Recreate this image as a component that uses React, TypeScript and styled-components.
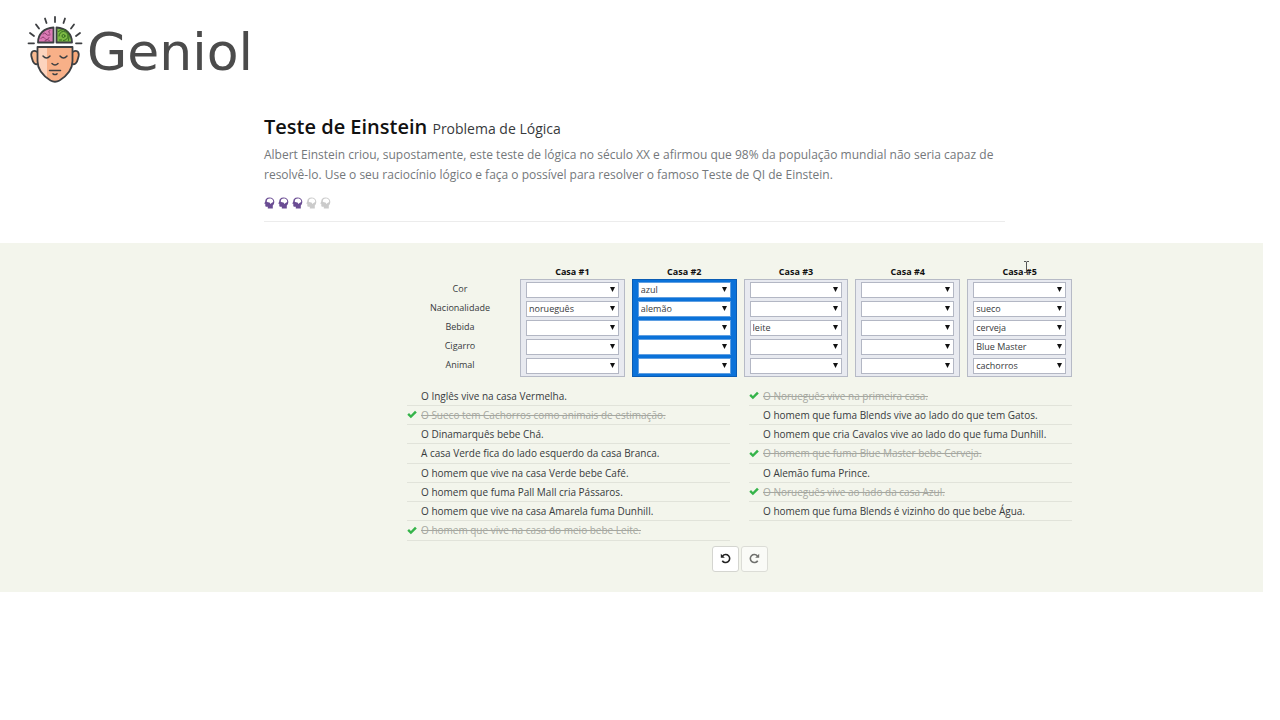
import React, { useState } from "react";
import styled, { createGlobalStyle } from "styled-components";

const GlobalStyle = createGlobalStyle`
  * { box-sizing: border-box; }
  body {
    margin: 0;
    background: #ffffff;
    font-family: "Open Sans", "Noto Sans", sans-serif;
    color: #373a3c;
  }
`;

const Page = styled.div`
  padding-right: 17px;
`;

const Header = styled.header`
  padding: 13px 27px 0;
`;

const Brand = styled.a`
  display: inline-flex;
  align-items: center;
  gap: 3px;
  color: #4b4b4b;
  text-decoration: none;
`;

const Wordmark = styled.span`
  font-family: "DejaVu Sans", sans-serif;
  font-size: 52px;
  font-weight: 400;
  line-height: 70px;
  padding-top: 4px;
`;

const Intro = styled.section`
  max-width: 747px;
  margin: 0 auto;
  padding: 24px 0 21px 6px;
`;

const Title = styled.h1`
  margin: 0;
  font-size: 20px;
  line-height: 26px;
  font-weight: 600;
  color: #111111;
`;

const Subtitle = styled.small`
  font-size: 14px;
  font-weight: 400;
  color: #373a3c;
`;

const Lead = styled.p`
  margin: 3px 0 12px;
  font-size: 12px;
  line-height: 20px;
  font-weight: 400;
  color: #74787b;
`;

const Difficulty = styled.div`
  display: flex;
  gap: 3px;
  padding-bottom: 12px;
  border-bottom: 1px solid #ececec;
`;

const HeadSvg = styled.svg<{ $on: boolean }>`
  display: block;
  color: ${(p) => (p.$on ? "#6a4c93" : "#cbcbcb")};
`;

const Puzzle = styled.main`
  background: #f3f5ec;
  padding: 22px 0 20px 216px;
`;

const Board = styled.div`
  max-width: 665px;
  margin: 0 auto;
`;

const Houses = styled.div`
  display: grid;
  grid-template-columns: 106px repeat(5, 1fr);
  column-gap: 7px;
`;

const Labels = styled.div`
  display: grid;
  grid-template-rows: repeat(5, 1fr);
  height: 94px;
  margin-top: 15px;
  align-items: center;
  text-align: center;
  font-size: 9px;
`;

const House = styled.section`
  display: flex;
  flex-direction: column;
`;

const HouseName = styled.h2`
  margin: 0;
  font-size: 9px;
  line-height: 14px;
  font-weight: 700;
  text-align: center;
  color: #111111;
`;

const HouseBox = styled.div<{ $active: boolean }>`
  display: flex;
  flex-direction: column;
  gap: 3px;
  padding: 2px 5px;
  border: 1px solid ${(p) => (p.$active ? "#0a5cb4" : "#b6bac6")};
  background: ${(p) => (p.$active ? "#0b72d9" : "#e8eaf0")};
`;

const Field = styled.div`
  position: relative;
`;

const Select = styled.select<{ $active: boolean }>`
  appearance: none;
  display: block;
  width: 100%;
  height: 16px;
  margin: 0;
  padding: 0 12px 0 2px;
  border: 1px solid ${(p) => (p.$active ? "#5f9fe2" : "#b3b7c4")};
  border-radius: 0;
  background: #ffffff;
  font-family: inherit;
  font-size: 9px;
  line-height: 14px;
  color: #373a3c;
`;

const Arrow = styled.svg`
  position: absolute;
  top: 5px;
  right: 4px;
  pointer-events: none;
`;

const Clues = styled.div`
  display: grid;
  grid-template-columns: 1fr 1fr;
  column-gap: 19px;
  margin-top: 10px;
`;

const ClueList = styled.ul`
  display: grid;
  grid-template-rows: repeat(8, 1fr);
  min-height: 154px;
  margin: 0;
  padding: 0;
  list-style: none;
`;

const Clue = styled.li<{ $done: boolean }>`
  display: grid;
  grid-template-columns: 10px 1fr;
  column-gap: 4px;
  align-items: center;
  border-bottom: 1px solid #e1e3da;
  font-size: 10px;
  line-height: 16px;
  white-space: nowrap;
  color: ${(p) => (p.$done ? "#a5a7a0" : "#373a3c")};
`;

const ClueText = styled.span<{ $done: boolean }>`
  grid-column: 2;
  text-decoration: ${(p) => (p.$done ? "line-through" : "none")};
`;

const Actions = styled.div`
  display: flex;
  justify-content: center;
  gap: 2px;
  margin-top: 5px;
`;

const ActionButton = styled.button`
  display: flex;
  align-items: center;
  justify-content: center;
  width: 27px;
  height: 26px;
  padding: 0;
  border: 1px solid #d4d5d0;
  border-radius: 3px;
  background: #ffffff;
  color: #222222;
  &:disabled {
    border-color: #dcddd7;
    background: #fafbf7;
    color: #6f706d;
  }
`;

const Pointer = styled.svg`
  position: absolute;
  left: 1023px;
  top: 261px;
  pointer-events: none;
`;

const Logo = () => (
  <svg width="57" height="69" viewBox="0 0 57 69" fill="none" stroke="#3d3f42" strokeLinecap="round" strokeLinejoin="round" aria-hidden="true">
    <path d="M10.500 36 C5 33 3 37 5 42.500 C6 47 8 49 11.500 48" fill="#f8b990" strokeWidth="1.800" />
    <path d="M45.500 36 C51 33 53 37 51 42.500 C50 47 48 49 44.500 48" fill="#f8a878" strokeWidth="1.800" />
    <path d="M10.500 31 H45.500 V45 C45.500 55 38 61 32.500 64.500 Q28 67 23.500 64.500 C18 61 10.500 55 10.500 45Z" fill="#f8b088" stroke="none" />
    <path d="M10.500 31 H20 V62 C14 58 10.500 52 10.500 45Z" fill="#fcd3bd" stroke="none" />
    <path d="M10.500 31 H45.500 V45 C45.500 55 38 61 32.500 64.500 Q28 67 23.500 64.500 C18 61 10.500 55 10.500 45Z" strokeWidth="1.800" />
    <path d="M11 26.500 C11 18 17 12 26.500 11.500 V26.500Z" fill="#dc7ab5" strokeWidth="1.800" />
    <path d="M29.500 26.500 V11.500 C39 12 45 18 45 26.500Z" fill="#7cb944" strokeWidth="1.800" />
    <g strokeWidth="1" stroke="#8d3f70">
      <path d="M14 22.500 q2 -3 4 0 t4 -1" />
      <path d="M16 18 q2 -2 3 0 t4 1" />
      <path d="M23 14.500 q-3 1 0 3" />
      <path d="M18 25.500 v-1 q3 -2 5 0.500" />
    </g>
    <g strokeWidth="1" stroke="#356b21">
      <circle cx="36.500" cy="20" r="1.500" />
      <path d="M32 20 a4.500 4.500 0 1 1 4.500 4.500" />
      <path d="M31.500 15.500 q5 -4 9 0 q3 4 1 9" />
      <path d="M32.500 24 h2" />
    </g>
    <g strokeWidth="1.800">
      <path d="M1.500 27.300 H7" />
      <path d="M49 27.300 H54.500" />
      <path d="M3 17 L7 20" />
      <path d="M53 17 L49 20" />
      <path d="M9 8.500 L12 12.500" />
      <path d="M47 8.500 L44 12.500" />
      <path d="M18 2.500 L19.500 7" />
      <path d="M38 2.500 L36.500 7" />
      <path d="M28 0.900 V6" />
    </g>
    <g strokeWidth="1.500">
      <path d="M16 40 q3.500 4 7 0" />
      <path d="M33 40 q3.500 4 7 0" />
      <path d="M25 47.500 q3 3 6 0" />
      <path d="M22.500 54.500 H33.500" />
      <path d="M26 57.800 q2 1.500 4 0" />
    </g>
  </svg>
);

const Head = ({ on }: { on: boolean }) => (
  <HeadSvg $on={on} width="11" height="12" viewBox="0 0 11 12" aria-hidden="true">
    <path d="M5.500 0.500 C2.500 0.500 1.300 2.300 1.300 4.200 L0.300 6.800 H1.300 V9 Q1.300 9.800 2.300 9.800 H3.800 V11.500 H8.800 V8.500 C9.800 7.500 10.300 6 10.300 4.700 C10.300 2.200 8.300 0.500 5.500 0.500Z" fill="currentColor" />
    <path d="M5.700 1.400 C4 1.400 3 2.200 3 3.300 C2.300 4.300 3 5.300 4 5.300 L5.500 5.600 L6.500 6.900 L7.500 6 C9 5.800 9.500 4.700 9.100 3.600 C8.800 2 7.300 1.400 5.700 1.400Z" fill="#ffffff" />
  </HeadSvg>
);

const CheckIcon = () => (
  <svg width="10" height="9" viewBox="0 0 10 9" aria-hidden="true">
    <path d="M0.300 4.700 L2 3 L3.900 4.900 L8 0.800 L9.800 2.400 L3.900 8.300Z" fill="#35b44a" />
  </svg>
);

const RotateIcon = ({ flip }: { flip?: boolean }) => (
  <svg width="11" height="11" viewBox="0 0 11 11" aria-hidden="true">
    <g transform={flip ? "translate(11 0) scale(-1 1)" : undefined}>
      <path d="M2.600 3 A4 4 0 1 1 2.300 7.700" fill="none" stroke="currentColor" strokeWidth="1.600" />
      <path d="M0.800 0.800 V4.800 H4.800Z" fill="currentColor" />
    </g>
  </svg>
);

const categories = ["Cor", "Nacionalidade", "Bebida", "Cigarro", "Animal"];

const houses = [
  ["", "norueguês", "", "", ""],
  ["azul", "alemão", "", "", ""],
  ["", "", "leite", "", ""],
  ["", "", "", "", ""],
  ["", "sueco", "cerveja", "Blue Master", "cachorros"],
];

const clueColumns: { text: string; done?: boolean }[][] = [
  [
    { text: "O Inglês vive na casa Vermelha." },
    { text: "O Sueco tem Cachorros como animais de estimação.", done: true },
    { text: "O Dinamarquês bebe Chá." },
    { text: "A casa Verde fica do lado esquerdo da casa Branca." },
    { text: "O homem que vive na casa Verde bebe Café." },
    { text: "O homem que fuma Pall Mall cria Pássaros." },
    { text: "O homem que vive na casa Amarela fuma Dunhill." },
    { text: "O homem que vive na casa do meio bebe Leite.", done: true },
  ],
  [
    { text: "O Norueguês vive na primeira casa.", done: true },
    { text: "O homem que fuma Blends vive ao lado do que tem Gatos." },
    { text: "O homem que cria Cavalos vive ao lado do que fuma Dunhill." },
    { text: "O homem que fuma Blue Master bebe Cerveja.", done: true },
    { text: "O Alemão fuma Prince." },
    { text: "O Norueguês vive ao lado da casa Azul.", done: true },
    { text: "O homem que fuma Blends é vizinho do que bebe Água." },
  ],
];

export default function App() {
  const [active, setActive] = useState(1);
  return (
    <Page>
      <GlobalStyle />
      <Header>
        <Brand href="#">
          <Logo />
          <Wordmark>Geniol</Wordmark>
        </Brand>
      </Header>
      <Intro>
        <Title>
          Teste de Einstein <Subtitle>Problema de Lógica</Subtitle>
        </Title>
        <Lead>
          Albert Einstein criou, supostamente, este teste de lógica no século XX e afirmou que 98% da população
          mundial não seria capaz de resolvê-lo. Use o seu raciocínio lógico e faça o possível para resolver o
          famoso Teste de QI de Einstein.
        </Lead>
        <Difficulty role="img" aria-label="3/5">
          {[0, 1, 2, 3, 4].map((n) => (
            <Head key={n} on={n < 3} />
          ))}
        </Difficulty>
      </Intro>
      <Puzzle>
        <Board>
          <Houses>
            <Labels>
              {categories.map((c) => (
                <span key={c} id={c}>{c}</span>
              ))}
            </Labels>
            {houses.map((values, h) => (
              <House key={h}>
                <HouseName id={`casa-${h + 1}`}>Casa #{h + 1}</HouseName>
                <HouseBox $active={h === active}>
                  {values.map((value, i) => (
                    <Field key={i}>
                      <Select
                        $active={h === active}
                        defaultValue={value}
                        aria-labelledby={`${categories[i]} casa-${h + 1}`}
                        onFocus={() => setActive(h)}
                      >
                        <option value={value}>{value}</option>
                      </Select>
                      <Arrow width="5" height="5" viewBox="0 0 5 5" aria-hidden="true">
                        <path d="M0 0 H5 L2.500 5Z" fill="#111111" />
                      </Arrow>
                    </Field>
                  ))}
                </HouseBox>
              </House>
            ))}
          </Houses>
          <Clues>
            {clueColumns.map((clues, c) => (
              <ClueList key={c}>
                {clues.map(({ text, done = false }) => (
                  <Clue key={text} $done={done}>
                    {done && <CheckIcon />}
                    <ClueText $done={done}>{text}</ClueText>
                  </Clue>
                ))}
              </ClueList>
            ))}
          </Clues>
          <Actions>
            <ActionButton type="button" aria-label="Desfazer">
              <RotateIcon />
            </ActionButton>
            <ActionButton type="button" aria-label="Refazer" disabled>
              <RotateIcon flip />
            </ActionButton>
          </Actions>
        </Board>
      </Puzzle>
      <Pointer width="7" height="12" viewBox="0 0 7 12" aria-hidden="true">
        <path d="M1 0.500 H3 L3.500 1 L4 0.500 H6 M3.500 1 V11 M1 11.500 H3 L3.500 11 L4 11.500 H6" fill="none" stroke="#555555" />
      </Pointer>
    </Page>
  );
}
